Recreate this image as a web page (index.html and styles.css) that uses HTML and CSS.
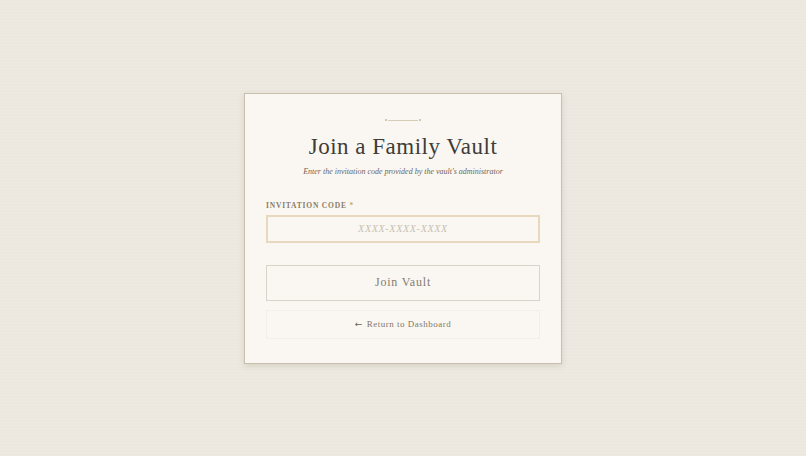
FILE: index.html
```html
<!DOCTYPE html>
<html lang="en">
<head>
<meta charset="utf-8">
<title>Join a Family Vault</title>
<link rel="stylesheet" href="styles.css">
</head>
<body>
<main class="page">
  <section class="card">
    <div class="ornament"><span class="dot"></span><span class="rule"></span><span class="dot"></span></div>
    <h1 class="title">Join a Family Vault</h1>
    <p class="subtitle">Enter the invitation code provided by the vault's administrator</p>
    <form class="form">
      <label class="label" for="code">INVITATION CODE <span class="req">*</span></label>
      <input class="input" id="code" type="text" placeholder="XXXX-XXXX-XXXX">
      <button class="btn" type="button">Join Vault</button>
      <a class="back" href="#"><span class="arrow">&larr;</span> Return to Dashboard</a>
    </form>
  </section>
</main>
</body>
</html>
```
FILE: styles.css
```css
html, body {
  margin: 0;
  padding: 0;
  height: 100%;
}
body {
  background-color: #ece8df;
  background-image: repeating-linear-gradient(0deg, rgba(255,255,255,0.07) 0px, rgba(255,255,255,0.07) 1px, rgba(0,0,0,0) 1px, rgba(0,0,0,0) 3px);
  font-family: "Liberation Serif", "DejaVu Serif", serif;
}
.page {
  height: 100%;
  display: flex;
  align-items: center;
  justify-content: center;
}
.card {
  box-sizing: border-box;
  width: 318px;
  height: 271px;
  background: #faf7f2;
  border: 1px solid #c9bfae;
  box-shadow: 0 2px 6px rgba(120, 105, 80, 0.18);
  padding: 25px 21px 0;
  display: flex;
  flex-direction: column;
  align-items: center;
}
.ornament {
  display: flex;
  align-items: center;
  height: 3px;
}
.dot {
  width: 2px;
  height: 2px;
  border-radius: 50%;
  background: #c6b69c;
}
.rule {
  width: 30px;
  height: 1px;
  margin: 0 1px;
  background: #d9ccb6;
}
.title {
  margin: 10px 0 0;
  font-weight: normal;
  font-size: 23px;
  line-height: 30px;
  color: #403c37;
  letter-spacing: 0.5px;
}
.subtitle {
  margin: 4px 0 0;
  font-style: italic;
  font-size: 8px;
  line-height: 12px;
  color: #6e6459;
}
.form {
  align-self: stretch;
  display: flex;
  flex-direction: column;
  margin-top: 23px;
}
.label {
  font-size: 7.5px;
  font-weight: bold;
  letter-spacing: 0.8px;
  color: #8a7b66;
  line-height: 10px;
}
.req {
  color: #c9a979;
}
.input {
  box-sizing: border-box;
  margin-top: 4px;
  height: 28px;
  border: 2px solid #e8d9be;
  background: #faf7f2;
  font-family: "Liberation Serif", serif;
  font-style: italic;
  font-size: 10px;
  letter-spacing: 0.7px;
  text-align: center;
  color: #4a443c;
  outline: none;
}
.input::placeholder {
  color: #c7bfb3;
}
.btn {
  box-sizing: border-box;
  margin-top: 22px;
  height: 36px;
  border: 1px solid #d9d3c9;
  background: #faf7f2;
  font-family: "Liberation Serif", serif;
  font-size: 12px;
  letter-spacing: 0.8px;
  color: #857c71;
}
.back {
  box-sizing: border-box;
  margin-top: 9px;
  height: 29px;
  border: 1px solid #f3efe8;
  display: flex;
  align-items: center;
  justify-content: center;
  gap: 4px;
  font-size: 9px;
  letter-spacing: 0.5px;
  color: #857865;
  text-decoration: none;
}
.arrow {
  font-family: "DejaVu Sans", sans-serif;
  font-size: 9px;
  color: #6e6355;
}
```
